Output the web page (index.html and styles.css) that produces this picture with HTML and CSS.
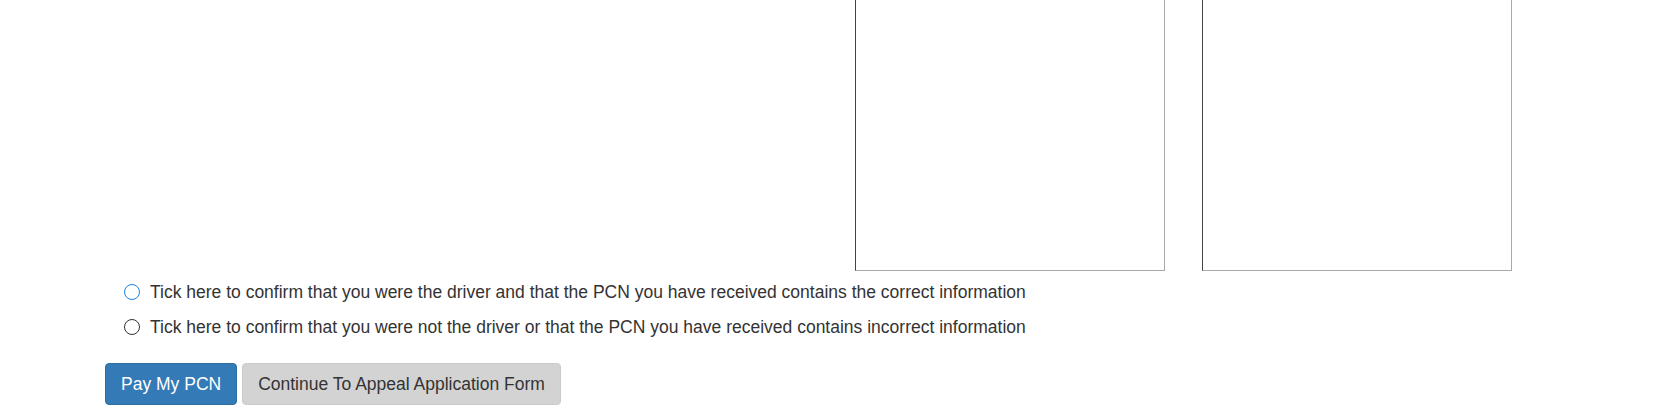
FILE: index.html
```html
<!DOCTYPE html>
<html lang="en">
<head>
    <meta charset="UTF-8">
    <title>Pay or Appeal PCN</title>
    <link rel="stylesheet" href="styles.css">
</head>
<body>
<div class="container">
    <div class="pcn-photos">
        <div class="pcn-photo"></div>
        <div class="pcn-photo"></div>
    </div>

    <div class="pcn-confirm">
        <label class="pcn-radio">
            <input type="radio" name="confirm" value="driver" class="radio-focus" />
            <span>Tick here to confirm that you were the driver and that the PCN you have received contains the correct information</span>
        </label>
        <label class="pcn-radio">
            <input type="radio" name="confirm" value="notdriver" />
            <span>Tick here to confirm that you were not the driver or that the PCN you have received contains incorrect information</span>
        </label>
    </div>

    <div class="pcn-actions">
        <button class="btn btn-primary" id="btnPay">Pay My PCN</button>
        <button class="btn btn-grey" id="btnAppeal">Continue To Appeal Application Form</button>
    </div>
</div>
</body>
</html>
```

FILE: styles.css
```css
body {
    margin: 0;
    font-family: "Liberation Sans", Arial, sans-serif;
    font-size: 17.5px;
    line-height: 24px;
    color: #333;
    background-color: #fff;
}
.container {
    padding-left: 105px;
}

.pcn-photos {
    display: flex;
    gap: 37px;
    margin-top: -30px;
    padding-left: 750px;
}
.pcn-photo {
    width: 308px;
    height: 299px;
    border: 1px solid;
    border-color: #444 #a9a9a9 #a9a9a9 #444;
    background-color: #fff;
}

.pcn-confirm {
    padding-left: 19px;
    margin-top: 9px;
}
.pcn-radio {
    display: flex;
    align-items: center;
    gap: 10px;
    margin-bottom: 10.5px;
}
.pcn-radio input {
    appearance: none;
    -webkit-appearance: none;
    margin: 0;
    width: 16px;
    height: 16px;
    border: 1px solid #333;
    border-radius: 50%;
    background-color: #fff;
}
.pcn-radio input.radio-focus {
    border-color: #1a82e2;
}

.pcn-actions {
    display: flex;
    gap: 5px;
    margin-top: 24px;
}
.btn {
    font-family: inherit;
    font-size: 17.5px;
    line-height: 24px;
    padding: 8px 15px;
    border: 1px solid transparent;
    border-radius: 4px;
    cursor: pointer;
}
.btn-primary {
    color: #fff;
    background-color: #337ab7;
    border-color: #2e6da4;
}
.btn-grey {
    color: #333;
    background-color: #d3d3d3;
    border-color: #cacaca;
}
```
